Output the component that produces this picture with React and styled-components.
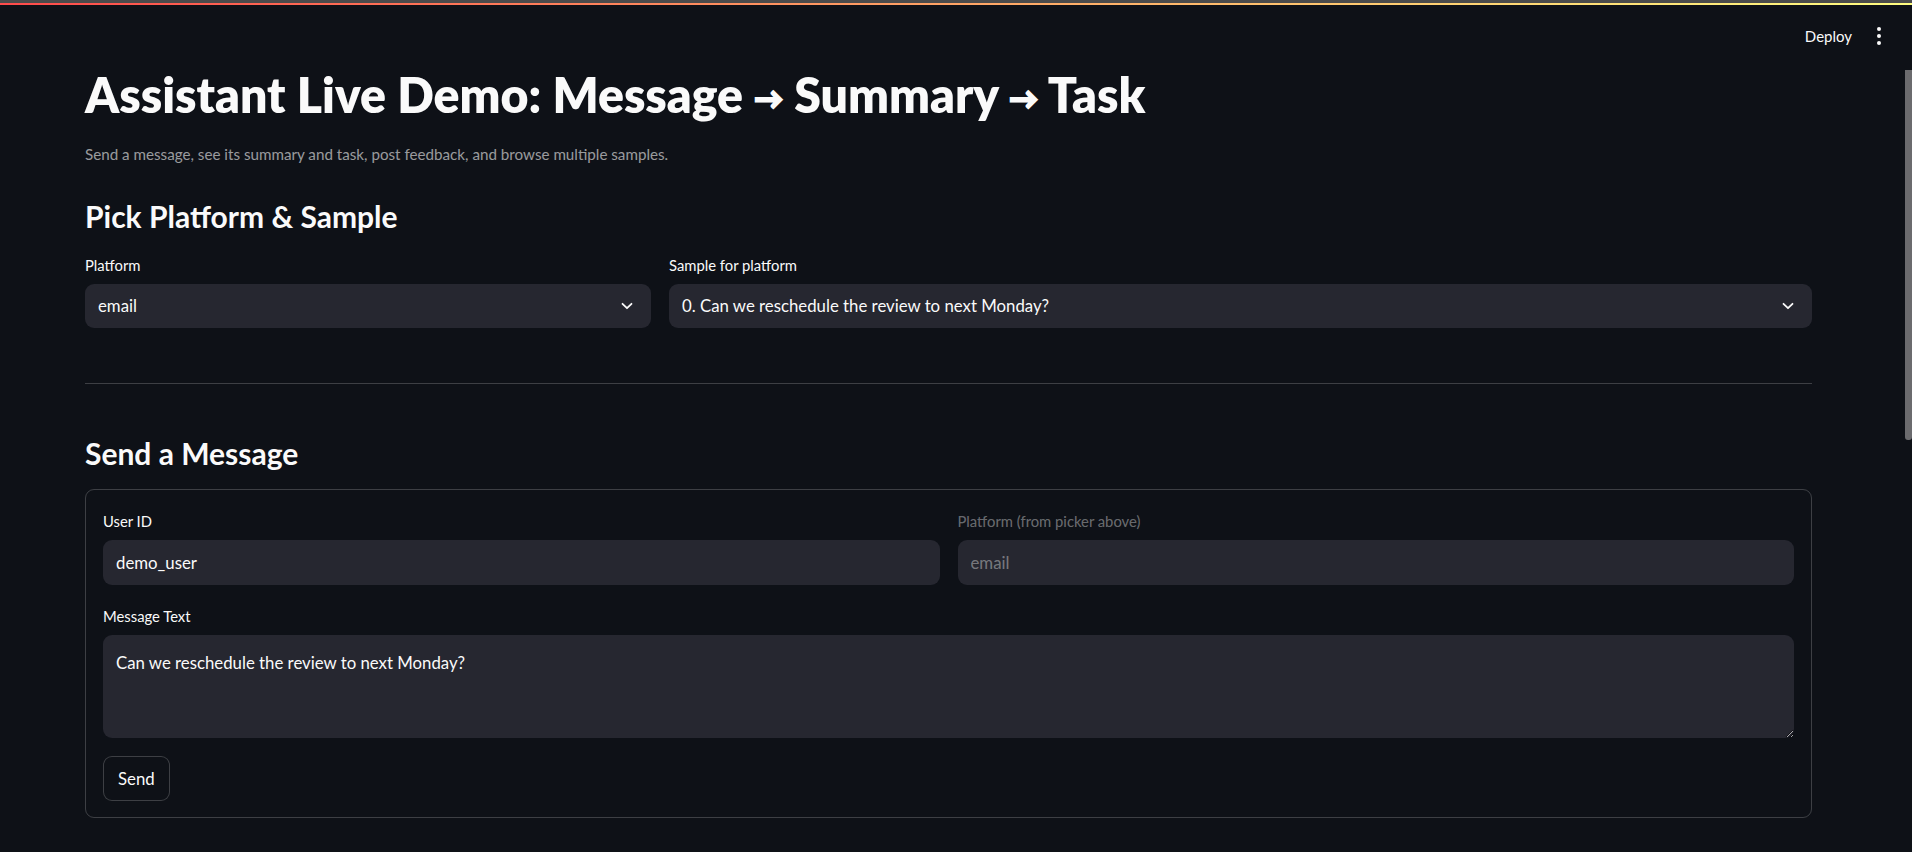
import React from 'react'
import styled, { createGlobalStyle } from 'styled-components'

const GlobalStyle = createGlobalStyle`
  html, body {
    margin: 0;
    padding: 0;
    background: #0e1117;
    color: rgb(250, 250, 250);
    font-family: "Lato", "Noto Sans", sans-serif;
    overflow: hidden;
  }
  * { box-sizing: border-box; }
`

const Decoration = styled.div`
  height: 5px;
  border-top: 3px solid #4b4b4b;
  background: linear-gradient(90deg, rgb(255, 75, 75), rgb(255, 253, 128));
`

const Header = styled.header`
  display: flex;
  justify-content: flex-end;
  align-items: center;
  gap: 25px;
  height: 62px;
  padding: 0 31px 0 0;
`

const DeployButton = styled.button`
  background: none;
  border: none;
  color: rgb(250, 250, 250);
  font-family: inherit;
  font-size: 15px;
  padding: 0;
  cursor: pointer;
`

const Kebab = styled.div`
  display: flex;
  flex-direction: column;
  gap: 3px;
  span {
    width: 4px;
    height: 4px;
    border-radius: 50%;
    background: rgb(250, 250, 250);
  }
`

const ScrollThumb = styled.div`
  position: fixed;
  top: 70px;
  right: 0;
  width: 7px;
  height: 370px;
  background: #6b6b6e;
  border-radius: 0 0 3px 3px;
`

const Main = styled.main`
  padding: 0 100px 0 85px;
`

const Title = styled.h1`
  margin: -3px 0 0;
  font-size: 48.2px;
  font-weight: 800;
  line-height: 60px;
`

const Arrow = styled.span`
  font-size: 0.6em;
  font-weight: 900;
  -webkit-text-stroke: 2px rgb(250, 250, 250);
  vertical-align: 0.15em;
`

const Caption = styled.p`
  margin: 15px 0 0;
  font-size: 15.2px;
  line-height: 22px;
  color: rgba(250, 250, 250, 0.6);
`

const SectionTitle = styled.h3`
  margin: ${(p) => p.top}px 0 0;
  font-size: 30px;
  font-weight: 700;
  line-height: 40px;
`

const Columns = styled.div`
  display: grid;
  grid-template-columns: ${(p) => p.cols};
  gap: 18px;
  margin-top: ${(p) => p.top || 0}px;
`

const Field = styled.div`
  display: flex;
  flex-direction: column;
`

const Label = styled.label`
  font-size: 14.8px;
  line-height: 20px;
  margin-bottom: 9px;
  color: ${(p) => (p.disabled ? 'rgba(250, 250, 250, 0.4)' : 'rgb(250, 250, 250)')};
`

const SelectBox = styled.div`
  display: flex;
  align-items: center;
  justify-content: space-between;
  height: 44px;
  padding: 0 18px 0 13px;
  background: #262730;
  border-radius: 9px;
  font-size: 16.8px;
`

const TextInput = styled.input`
  height: 45px;
  padding: 0 13px;
  background: #262730;
  border: none;
  border-radius: 9px;
  outline: none;
  font-family: inherit;
  font-size: 16.8px;
  color: rgb(250, 250, 250);
  &:disabled {
    color: rgba(250, 250, 250, 0.4);
  }
`

const TextArea = styled.textarea`
  height: 103px;
  padding: 16px 13px;
  background: #262730;
  border: none;
  border-radius: 9px;
  outline: none;
  resize: vertical;
  font-family: inherit;
  font-size: 16.8px;
  line-height: 24px;
  color: rgb(250, 250, 250);
  color-scheme: dark;
`

const Divider = styled.hr`
  margin: 55px 0 0;
  border: none;
  border-top: 1px solid rgba(250, 250, 250, 0.2);
`

const Form = styled.form`
  display: flex;
  flex-direction: column;
  gap: 21px;
  margin-top: 16px;
  padding: 21px 17px 16px;
  border: 1px solid rgba(250, 250, 250, 0.2);
  border-radius: 9px;
`

const Button = styled.button`
  align-self: flex-start;
  height: 45px;
  margin-top: -3px;
  padding: 0 14px;
  background: #0e1117;
  border: 1px solid rgba(250, 250, 250, 0.2);
  border-radius: 9px;
  color: rgb(250, 250, 250);
  font-family: inherit;
  font-size: 16.8px;
  cursor: pointer;
`

function Chevron() {
  return (
    <svg width="12" height="8" viewBox="0 0 12 8" fill="none">
      <path d="M1.5 1.8 6 6.2l4.5-4.4" stroke="rgb(250,250,250)" strokeWidth="1.8" strokeLinecap="round" strokeLinejoin="round" />
    </svg>
  )
}

function Select({ label, value }) {
  return (
    <Field>
      <Label>{label}</Label>
      <SelectBox>
        <span>{value}</span>
        <Chevron />
      </SelectBox>
    </Field>
  )
}

function App() {
  return (
    <>
      <GlobalStyle />
      <Decoration />
      <Header>
        <DeployButton>Deploy</DeployButton>
        <Kebab><span /><span /><span /></Kebab>
      </Header>
      <ScrollThumb />
      <Main>
        <Title>
          Assistant Live Demo: Message <Arrow>→</Arrow> Summary <Arrow>→</Arrow> Task
        </Title>
        <Caption>Send a message, see its summary and task, post feedback, and browse multiple samples.</Caption>

        <SectionTitle top={31}>Pick Platform &amp; Sample</SectionTitle>
        <Columns cols="566fr 1143fr" top={19}>
          <Select label="Platform" value="email" />
          <Select label="Sample for platform" value="0. Can we reschedule the review to next Monday?" />
        </Columns>

        <Divider />

        <SectionTitle top={49}>Send a Message</SectionTitle>
        <Form onSubmit={(e) => e.preventDefault()}>
          <Columns cols="1fr 1fr">
            <Field>
              <Label>User ID</Label>
              <TextInput defaultValue="demo_user" />
            </Field>
            <Field>
              <Label disabled>Platform (from picker above)</Label>
              <TextInput value="email" disabled readOnly />
            </Field>
          </Columns>
          <Field>
            <Label>Message Text</Label>
            <TextArea defaultValue="Can we reschedule the review to next Monday?" />
          </Field>
          <Button type="submit">Send</Button>
        </Form>
      </Main>
    </>
  )
}

export default App
